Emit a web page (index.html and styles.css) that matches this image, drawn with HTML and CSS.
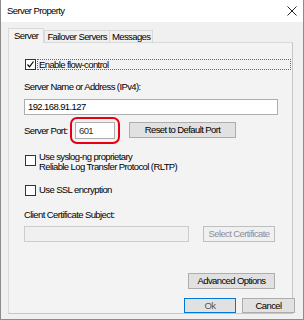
FILE: index.html
```html
<!DOCTYPE html>
<html lang="en">
<head>
    <meta charset="UTF-8">
    <title>Server Property</title>
    <link rel="stylesheet" href="styles.css">
</head>
<body>
    <div class="window">
        <div class="titlebar">
            <span class="title">Server Property</span>
            <svg class="close" width="10" height="10" viewBox="0 0 10 10">
                <path d="M0.5 0.5 L9.5 9.5 M9.5 0.5 L0.5 9.5" stroke="#222" stroke-width="1" fill="none"/>
            </svg>
        </div>

        <div class="content">
            <div class="tabs">
                <div class="tab active">Server</div>
                <div class="tab">Failover Servers</div>
                <div class="tab">Messages</div>
            </div>

            <div class="panel">
                <div class="check-row flow">
                    <span class="box checked">
                        <svg width="9" height="9" viewBox="0 0 9 9">
                            <path d="M1.5 4.5 L3.5 6.8 L7.5 1.5" stroke="#000" stroke-width="1.2" fill="none"/>
                        </svg>
                    </span>
                    <span class="focus">Enable flow-control</span>
                </div>

                <div class="label name-label">Server Name or Address (IPv4):</div>
                <div class="field name-field">192.168.91.127</div>

                <div class="port-row">
                    <span class="label port-label">Server Port:</span>
                    <span class="field port-field">601</span>
                    <span class="ring"></span>
                    <button class="btn reset-btn">Reset to Default Port</button>
                </div>

                <div class="check-row syslog">
                    <span class="box"></span>
                    <span class="two-line">Use syslog-ng proprietary<br>Reliable Log Transfer Protocol (RLTP)</span>
                </div>

                <div class="check-row ssl">
                    <span class="box"></span>
                    <span>Use SSL encryption</span>
                </div>

                <div class="label cert-label">Client Certificate Subject:</div>
                <div class="cert-row">
                    <span class="field disabled cert-field"></span>
                    <button class="btn disabled cert-btn">Select Certificate</button>
                </div>

                <div class="adv-row">
                    <button class="btn adv-btn">Advanced Options</button>
                </div>
            </div>

            <div class="footer">
                <button class="btn ok-btn">Ok</button>
                <button class="btn cancel-btn">Cancel</button>
            </div>
        </div>
    </div>
</body>
</html>
```

FILE: styles.css
```css
* {
    box-sizing: border-box;
}

body {
    margin: 0;
    font-family: "Liberation Sans", Arial, sans-serif;
    font-size: 9.5px;
    letter-spacing: -0.6px;
    color: #000;
}

.window {
    width: 304px;
    height: 320px;
    border: 1px solid #8c8c8c;
    border-top: none;
    background: #f0f0f0;
    overflow: hidden;
}

.titlebar {
    height: 22px;
    background: #fff;
    display: flex;
    align-items: center;
    justify-content: space-between;
    padding: 0 6px 0 6px;
}

.title {
    line-height: 12px;
}

.close {
    display: block;
}

.content {
    padding: 7px 0 0 7px;
}

.tabs {
    display: flex;
    align-items: flex-end;
    height: 13px;
}

.tab {
    height: 12px;
    line-height: 12px;
    border: 1px solid #d9d9d9;
    border-bottom: none;
    background: #f0f0f0;
    padding: 0 2px;
    white-space: nowrap;
}

.tab + .tab {
    margin-left: -1px;
}

.tab.active {
    height: 15px;
    line-height: 14px;
    background: #f3f3f3;
    padding: 0 5px;
    margin-bottom: -1px;
    margin-right: 1px;
    position: relative;
    z-index: 1;
}

.panel {
    width: 285px;
    height: 272px;
    border: 1px solid #d9d9d9;
    border-right-color: #c6c6c6;
    border-bottom-color: #c6c6c6;
    background: #f3f3f3;
    padding: 15px 0 0 15px;
}

.label {
    line-height: 12px;
    white-space: nowrap;
}

.check-row {
    display: flex;
    align-items: center;
    margin-left: 1px;
    line-height: 12px;
}

.box {
    width: 11px;
    height: 11px;
    border: 1px solid #333;
    background: #fff;
    display: flex;
    align-items: center;
    justify-content: center;
    flex-shrink: 0;
    margin-right: 3px;
}

.flow {
    height: 13px;
}

.focus {
    flex: 1;
    height: 11px;
    line-height: 9px;
    border: 1px dotted #666;
    margin-right: 1px;
    padding-left: 1px;
    margin-left: -2px;
}

.name-label {
    margin-top: 10px;
}

.field {
    display: block;
    height: 16px;
    border: 1px solid #adadad;
    background: #fff;
    line-height: 14px;
    padding-left: 3px;
}

.name-field {
    margin-top: 6px;
    width: 254px;
}

.port-row {
    display: flex;
    align-items: flex-start;
    margin-top: 7px;
    height: 17px;
    position: relative;
}

.port-label {
    width: 51px;
    line-height: 17px;
}

.port-field {
    width: 40px;
    height: 17px;
    line-height: 15px;
    color: #333;
}

.ring {
    position: absolute;
    left: 46px;
    top: -5px;
    width: 50px;
    height: 27px;
    border: 2px solid #e60012;
    border-radius: 7px;
}

.btn {
    font-family: inherit;
    font-size: 9.5px;
    letter-spacing: -0.6px;
    color: #000;
    background: #e1e1e1;
    border: 1px solid #adadad;
    padding: 0;
    height: 16px;
    line-height: 14px;
    white-space: nowrap;
}

.reset-btn {
    margin-left: 14px;
    width: 107px;
}

.syslog {
    align-items: flex-start;
    margin-top: 13px;
}

.syslog .box {
    margin-top: 3px;
}

.two-line {
    line-height: 10px;
}

.ssl {
    margin-top: 12px;
}

.cert-label {
    margin-top: 13px;
}

.cert-row {
    display: flex;
    margin-top: 5px;
}

.field.disabled {
    background: #f0f0f0;
    border-color: #cccccc;
}

.cert-field {
    width: 165px;
}

.btn.disabled {
    background: #f0f0f0;
    border-color: #bfbfbf;
    color: #8d8d9a;
}

.cert-btn {
    margin-left: 14px;
    width: 72px;
}

.adv-row {
    margin-top: 31px;
    padding-left: 164px;
}

.adv-btn {
    width: 87px;
}

.footer {
    display: flex;
    margin-top: -16px;
    padding-left: 176px;
    gap: 6px;
    position: relative;
}

.ok-btn {
    width: 52px;
    height: 15px;
    line-height: 13px;
    border-color: #0078d7;
    color: #555;
}

.cancel-btn {
    width: 53px;
    height: 15px;
    line-height: 13px;
}
```
